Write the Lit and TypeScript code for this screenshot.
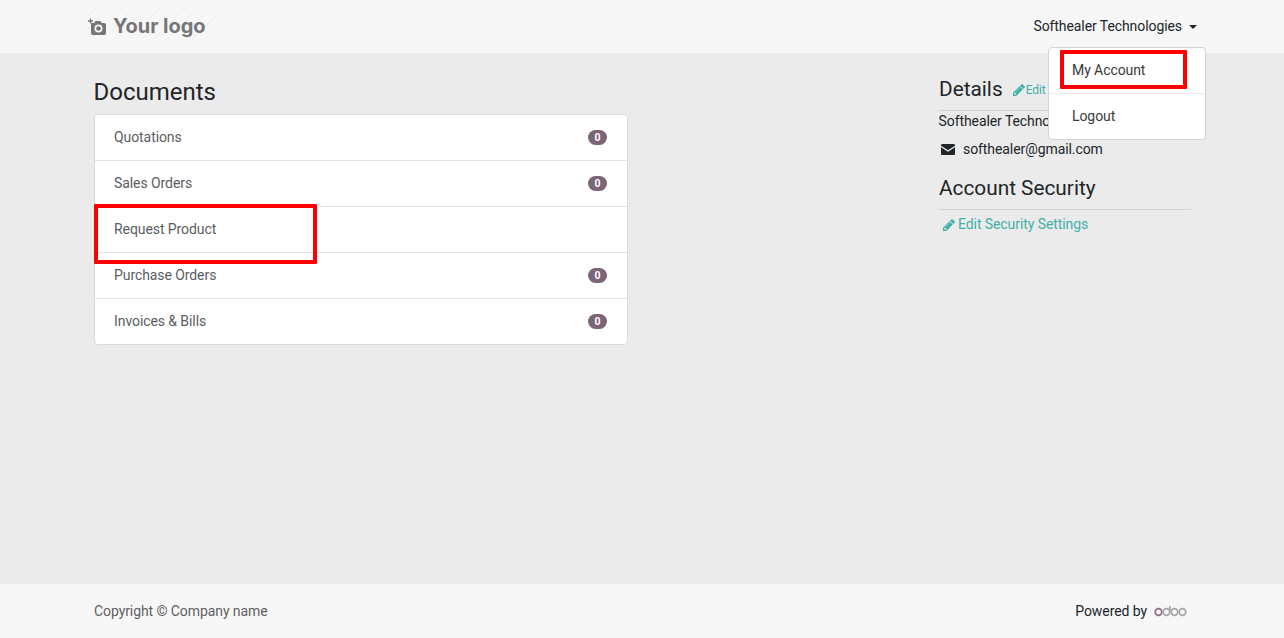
import { LitElement, html, css } from "lit";
import { customElement } from "lit/decorators.js";

const pencil = html`<svg class="pencil" viewBox="0 0 1536 1536" width="12" height="12" aria-hidden="true"><path fill="currentColor" d="M363 1408l91-91-235-235-91 91v107h128v128h107zM886 480q0-22-22-22-10 0-17 7L305 1007q-7 7-7 17 0 22 22 22 10 0 17-7l542-542q7-7 7-17zM832 288l416 416-832 832H0v-416zM1515 384q0 53-37 90l-166 166-416-416 166-165q36-38 90-38 53 0 91 38l235 234q37 39 37 91z"/></svg>`;

const rows = [
  { label: "Quotations", count: "0" },
  { label: "Sales Orders", count: "0" },
  { label: "Request Product", count: "" },
  { label: "Purchase Orders", count: "0" },
  { label: "Invoices & Bills", count: "0" },
];

@customElement("app-root")
export class AppRoot extends LitElement {
  static styles = css`
    :host {
      display: flex;
      flex-direction: column;
      position: relative;
      height: 638px;
      overflow: hidden;
      background: #ebebeb;
      color: #212529;
      font: 14px/21px Roboto, "Liberation Sans", sans-serif;
      letter-spacing: -0.08px;
    }
    .header {
      height: 53px;
      flex: none;
      background: #f7f7f7;
      padding: 0 87px 0 85px;
      display: flex;
      align-items: center;
      justify-content: space-between;
    }
    .logo {
      width: 131px;
      height: 37px;
      display: flex;
      align-items: center;
      gap: 7px;
      padding-left: 3px;
      box-sizing: border-box;
      color: #767676;
      font: 700 20px/37px Inter, sans-serif;
      letter-spacing: 0;
      background: repeating-linear-gradient(135deg, #f7f7f7 0 7px, #f3f3f3 7px 9px);
    }
    .logo svg { flex: none; }
    .user { display: flex; align-items: center; gap: 7px; color: #212529; }
    .caret {
      width: 0;
      height: 0;
      border-left: 4.2px solid transparent;
      border-right: 4.2px solid transparent;
      border-top: 4.2px solid #212529;
    }
    .main {
      flex: 1;
      display: flex;
      justify-content: space-between;
      padding: 0 93px 0 94px;
    }
    .docs { width: 534px; padding-top: 25px; }
    h3 {
      margin: 0 0 7px -0.5px;
      font-size: 24px;
      font-weight: 400;
      line-height: 29px;
      letter-spacing: 0;
      color: #212529;
    }
    .list {
      background: #fff;
      border: 1px solid #dcdcdc;
      border-radius: 4px;
      overflow: hidden;
    }
    .row {
      height: 45px;
      display: flex;
      align-items: center;
      justify-content: space-between;
      padding: 0 20px 0 19px;
      color: #5a5e62;
      border-bottom: 1px solid #e2e2e2;
    }
    .row:last-child { border-bottom: 0; }
    .badge {
      min-width: 19px;
      height: 15px;
      border-radius: 8px;
      background: #7c6576;
      color: #fff;
      font-size: 10.5px;
      font-weight: 700;
      line-height: 15px;
      text-align: center;
    }
    .side { width: 252px; padding-top: 22px; }
    .details-head {
      display: flex;
      align-items: baseline;
      gap: 10px;
      height: 36px;
      border-bottom: 1px solid #d2d2d2;
      box-sizing: border-box;
    }
    h4 {
      margin: 0;
      font-size: 20.8px;
      font-weight: 400;
      line-height: 28px;
      letter-spacing: 0;
    }
    .link { color: #3fb0a8; display: inline-flex; align-items: center; gap: 3px; }
    .small { font-size: 12px; line-height: 18px; gap: 1px; }
    .name { white-space: nowrap; margin-left: -0.5px; }
    .mail { display: flex; align-items: center; gap: 8px; margin-top: 7px; padding-left: 2px; }
    .security { margin-top: 11px; height: 39px; border-bottom: 1px solid #d2d2d2; box-sizing: border-box; padding-top: 3px; }
    .edit { margin: 4px 0 0 4px; }
    .menu {
      position: absolute;
      left: 1048px;
      top: 47px;
      width: 156px;
      height: 91px;
      background: #fff;
      border: 1px solid #d4d4d4;
      border-radius: 4px;
      display: flex;
      flex-direction: column;
      color: #3a3a3a;
    }
    .menu div { flex: 1; display: flex; align-items: center; padding-left: 23px; }
    .menu div:first-child { flex: none; height: 45px; border-bottom: 1px solid #ececec; }
    .mark { position: absolute; border: 4px solid #ff0000; box-sizing: border-box; border-radius: 1px; }
    .m1 { left: 94px; top: 204px; width: 223px; height: 60px; }
    .m2 { left: 1060px; top: 50px; width: 127px; height: 39px; }
    .footer {
      height: 54px;
      flex: none;
      background: #f7f7f7;
      padding: 0 97px 0 94px;
      display: flex;
      align-items: center;
      justify-content: space-between;
      color: #5f5f5f;
    }
    .powered { display: flex; align-items: center; gap: 7px; color: #212529; }
    .odoo { display: block; }
  `;

  render() {
    return html`
      <div class="header">
        <div class="logo">
          <svg width="18" height="18" viewBox="0 0 18 18" aria-hidden="true">
            <path fill="#767676" d="M3 5h3.200l1.300-2h5l1.300 2h2.200A2 2 0 0 1 18 7v8a2 2 0 0 1-2 2H5a2 2 0 0 1-2-2z" />
            <circle cx="10.500" cy="10.500" r="3.200" fill="none" stroke="#f7f7f7" stroke-width="1.700" />
            <path stroke="#767676" stroke-width="1.300" d="M0 3h5M2.500 .5v5" />
          </svg>
          <span>Your logo</span>
        </div>
        <div class="user"><span>Softhealer Technologies</span><span class="caret"></span></div>
      </div>
      <div class="main">
        <div class="docs">
          <h3>Documents</h3>
          <div class="list">
            ${rows.map(
              (r) => html`<div class="row"><span>${r.label}</span>${r.count ? html`<span class="badge">${r.count}</span>` : ""}</div>`
            )}
          </div>
        </div>
        <div class="side">
          <div class="details-head">
            <h4>Details</h4>
            <span class="link small">${pencil}Edit</span>
          </div>
          <div class="name">Softhealer Technologies</div>
          <div class="mail">
            <svg width="14" height="11" viewBox="0 0 14 11" aria-hidden="true">
              <path fill="#212529" d="M1.300 0h11.400A1.300 1.300 0 0 1 14 1.300v.5L7 6.300 0 1.800v-.5A1.300 1.300 0 0 1 1.300 0zM0 3.300l7 4.500 7-4.500v6.400A1.300 1.300 0 0 1 12.700 11H1.300A1.300 1.300 0 0 1 0 9.700z" />
            </svg>
            <span>softhealer@gmail.com</span>
          </div>
          <div class="security"><h4>Account Security</h4></div>
          <div class="edit"><span class="link">${pencil}Edit Security Settings</span></div>
        </div>
      </div>
      <div class="footer">
        <span>Copyright © Company name</span>
        <div class="powered">
          <span>Powered by</span>
          <svg class="odoo" width="33" height="11" viewBox="0 0 33 11" aria-hidden="true">
            <g fill="none" stroke-width="1.700">
              <circle cx="4.500" cy="6" r="3.300" stroke="#8f6f88" />
              <circle cx="12.500" cy="6" r="3.300" stroke="#a6a6a6" />
              <path stroke="#a6a6a6" d="M15.800 6V0" />
              <circle cx="20.500" cy="6" r="3.300" stroke="#a6a6a6" />
              <circle cx="28.500" cy="6" r="3.300" stroke="#a6a6a6" />
            </g>
          </svg>
        </div>
      </div>
      <div class="menu">
        <div>My Account</div>
        <div>Logout</div>
      </div>
      <div class="mark m1"></div>
      <div class="mark m2"></div>
    `;
  }
}
